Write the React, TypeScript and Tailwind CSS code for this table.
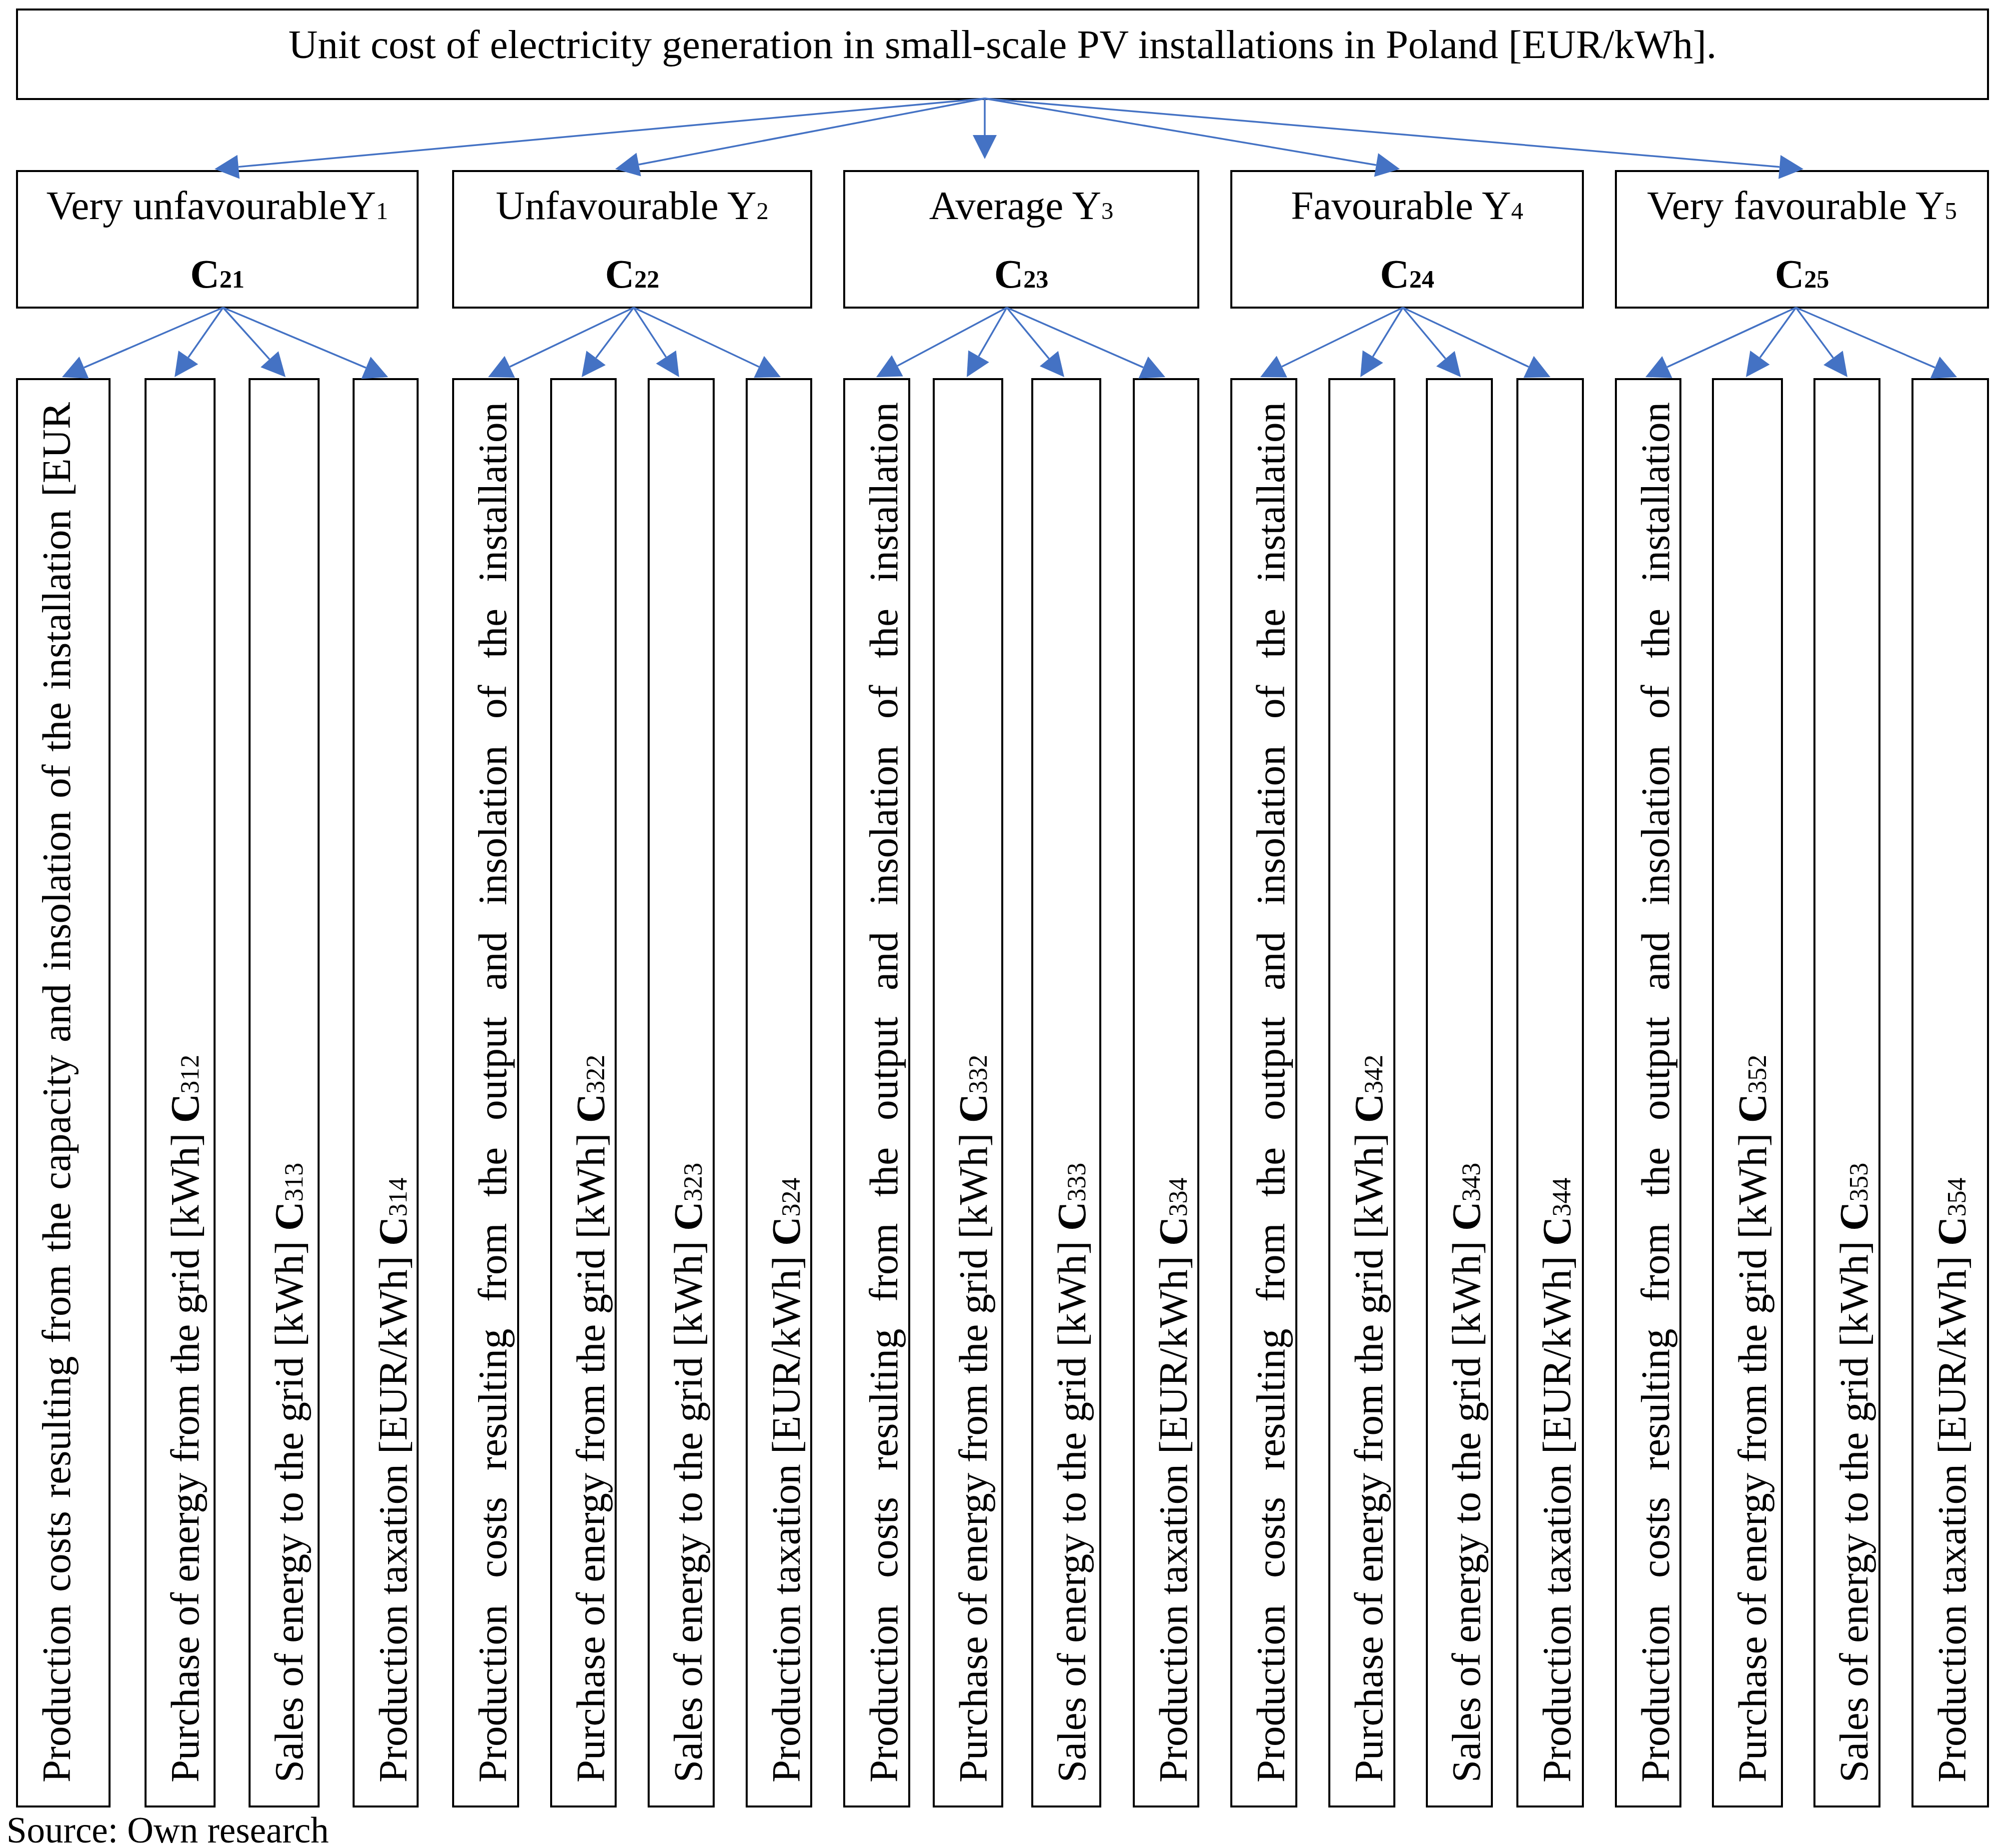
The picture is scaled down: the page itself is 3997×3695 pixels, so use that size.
import type { ReactNode } from 'react';

const BLUE = '#4472C4';

type Leaf = { cls: string; text: string; sub?: string; justify?: boolean };
type Column = { cls: string; title: string; y: string; c: string; leaves: Leaf[] };

const PROD_OUTPUT = 'Production costs resulting from the output and insolation of the installation';

function stdLeaves(n: string, first: [string, string, string, string]): Leaf[] {
  return [
    { cls: first[0], text: PROD_OUTPUT, justify: true },
    { cls: first[1], text: 'Purchase of energy from the grid [kWh]', sub: `3${n}2` },
    { cls: first[2], text: 'Sales of energy to the grid [kWh]', sub: `3${n}3` },
    { cls: first[3], text: 'Production taxation [EUR/kWh]', sub: `3${n}4` },
  ];
}

const columns: Column[] = [
  {
    cls: 'w-[805px]',
    title: 'Very unfavourable',
    y: '1',
    c: '21',
    leaves: [
      {
        cls: 'w-[189px]',
        text: 'Production costs resulting from the capacity and insolation of the installation [EUR',
        justify: true,
      },
      { cls: 'ml-[68px] w-[142px]', text: 'Purchase of energy from the grid [kWh]', sub: '312' },
      { cls: 'ml-[66px] w-[142px]', text: 'Sales of energy to the grid [kWh]', sub: '313' },
      { cls: 'ml-[66px] w-[132px]', text: 'Production taxation [EUR/kWh]', sub: '314' },
    ],
  },
  {
    cls: 'ml-[67px] w-[720px]',
    title: 'Unfavourable ',
    y: '2',
    c: '22',
    leaves: stdLeaves('2', ['w-[134px]', 'ml-[62px] w-[133px]', 'ml-[62px] w-[134px]', 'ml-[62px] w-[133px]']),
  },
  {
    cls: 'ml-[62px] w-[712px]',
    title: 'Average ',
    y: '3',
    c: '23',
    leaves: stdLeaves('3', ['w-[134px]', 'ml-[45px] w-[141px]', 'ml-[56px] w-[140px]', 'ml-[63px] w-[133px]']),
  },
  {
    cls: 'ml-[62px] w-[707px]',
    title: 'Favourable ',
    y: '4',
    c: '24',
    leaves: stdLeaves('4', ['w-[134px]', 'ml-[62px] w-[134px]', 'ml-[61px] w-[134px]', 'ml-[47px] w-[135px]']),
  },
  {
    cls: 'ml-[62px] w-[748px]',
    title: 'Very favourable ',
    y: '5',
    c: '25',
    leaves: stdLeaves('5', ['w-[133px]', 'ml-[61px] w-[142px]', 'ml-[61px] w-[134px]', 'ml-[62px] w-[155px]']),
  },
];

// arrow geometry (page pixels)
const TOP_ROOT: [number, number] = [1969, 197];
const TOP_TIPS: [number, number][] = [
  [429, 338],
  [1230, 338],
  [1969, 318],
  [2799, 338],
  [3606, 338],
];
const CHILD_ROOTS = [446, 1267, 2013, 2805, 3591];
const LEAF_TIPS = [
  [124, 349, 571, 776],
  [976, 1163, 1358, 1561],
  [1752, 1933, 2128, 2330],
  [2520, 2720, 2921, 3100],
  [3290, 3491, 3694, 3913],
];

function arrow(x1: number, y1: number, x2: number, y2: number, len = 48, hw = 24) {
  const dx = x2 - x1;
  const dy = y2 - y1;
  const d = Math.hypot(dx, dy);
  const ux = dx / d;
  const uy = dy / d;
  const bx = x2 - ux * len;
  const by = y2 - uy * len;
  return {
    line: { x1, y1, x2: bx, y2: by },
    pts: `${x2},${y2} ${bx - uy * hw},${by + ux * hw} ${bx + uy * hw},${by - ux * hw}`,
  };
}

function Arrows() {
  const list = [
    ...TOP_TIPS.map(([x, y]) => arrow(TOP_ROOT[0], TOP_ROOT[1], x, y)),
    ...CHILD_ROOTS.flatMap((rx, i) => LEAF_TIPS[i].map((tx) => arrow(rx, 615, tx, 754))),
  ];
  return (
    <svg
      className="absolute inset-0 pointer-events-none"
      width={3997}
      height={3695}
      viewBox="0 0 3997 3695"
    >
      {list.map((a, i) => (
        <g key={i}>
          <line {...a.line} stroke={BLUE} strokeWidth={3.5} />
          <polygon points={a.pts} fill={BLUE} />
        </g>
      ))}
    </svg>
  );
}

function Code({ c, bold }: { c: string; bold?: boolean }) {
  return (
    <>
      <b className="font-bold">C</b>
      <span className={bold ? 'text-[0.62em] font-bold' : 'text-[0.64em]'}>{c}</span>
    </>
  );
}

function LeafBox({ leaf }: { leaf: Leaf }) {
  let content: ReactNode;
  if (leaf.justify) {
    content = (
      <div className="flex h-full justify-between whitespace-nowrap">
        {leaf.text.split(' ').map((w, i) => (
          <span key={i}>{w}</span>
        ))}
      </div>
    );
  } else {
    content = (
      <div className="whitespace-nowrap">
        {leaf.text} {leaf.sub && <Code c={leaf.sub} />}
      </div>
    );
  }
  return (
    <div className={`${leaf.cls} h-[2858px] shrink-0 border-4 border-black overflow-hidden`}>
      <div className="h-full w-full rotate-180 [writing-mode:vertical-rl] [text-orientation:sideways] pt-[46px] pb-[44px] pr-[29px] text-[81px] leading-[1.2]">
        {content}
      </div>
    </div>
  );
}

export default function App() {
  return (
    <div className="relative w-[3997px] h-[3695px] bg-white text-black font-['Liberation_Serif',serif]">
      <div className="pl-[32px] pr-[20px] pt-[17px]">
        {/* top box */}
        <div className="h-[183px] border-4 border-black pt-[20px] text-center text-[81px] leading-[1.2]">
          Unit cost of electricity generation in small-scale PV installations in Poland [EUR/kWh].
        </div>

        {/* five scenario columns */}
        <div className="mt-[140px] flex">
          {columns.map((col) => (
            <div key={col.c} className={`${col.cls} shrink-0`}>
              <div className="h-[277px] border-4 border-black pt-[19px] text-center text-[81px] leading-[1.2]">
                <div className="whitespace-nowrap">
                  {col.title}Y<span className="text-[0.6em]">{col.y}</span>
                </div>
                <div className="mt-[40px]">
                  <Code c={col.c} bold />
                </div>
              </div>
              <div className="mt-[139px] flex">
                {col.leaves.map((leaf, i) => (
                  <LeafBox key={i} leaf={leaf} />
                ))}
              </div>
            </div>
          ))}
        </div>
      </div>

      <div className="pl-[13px] mt-[2px] text-[73px] leading-[1.2]">Source: Own research</div>

      <Arrows />
    </div>
  );
}
